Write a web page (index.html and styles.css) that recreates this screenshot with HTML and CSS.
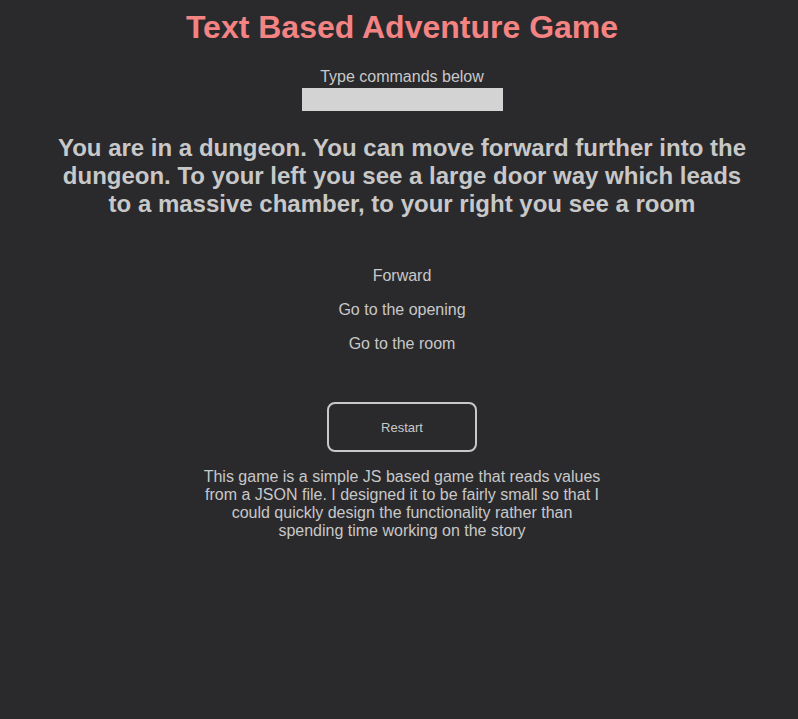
FILE: index.html
```html
<!DOCTYPE html>
<html lang="en">
<head>
<meta charset="utf-8">
<title>Text Based Adventure Game</title>
<link rel="stylesheet" href="styles.css">
</head>
<body>
<main class="game">
  <h1 class="title">Text Based Adventure Game</h1>
  <div class="prompt">
    <label class="prompt-label" for="cmd">Type commands below</label>
    <input class="prompt-input" id="cmd" type="text">
  </div>
  <h2 class="scene">You are in a dungeon. You can move forward further into the dungeon. To your left you see a large door way which leads to a massive chamber, to your right you see a room</h2>
  <div class="options">
    <p class="option">Forward</p>
    <p class="option">Go to the opening</p>
    <p class="option">Go to the room</p>
  </div>
  <button class="restart" type="button">Restart</button>
  <p class="about">This game is a simple JS based game that reads values from a JSON file. I designed it to be fairly small so that I could quickly design the functionality rather than spending time working on the story</p>
</main>
</body>
</html>
```
FILE: styles.css
```css
html, body {
  margin: 0;
  padding: 0;
  background: #2a2a2d;
}
body {
  font-family: "Liberation Sans", Arial, sans-serif;
  color: #c8c8c8;
  min-height: 719px;
}
.game {
  display: flex;
  flex-direction: column;
  align-items: center;
  text-align: center;
  padding-left: 6px;
}
.title {
  margin: 9px 0 22px;
  font-size: 32px;
  font-weight: bold;
  color: #f48383;
  line-height: 37px;
}
.prompt {
  display: flex;
  flex-direction: column;
  align-items: center;
  gap: 2px;
}
.prompt-label {
  font-size: 16px;
  line-height: 18px;
}
.prompt-input {
  width: 201px;
  height: 23px;
  box-sizing: border-box;
  border: none;
  background: #d3d3d3;
  margin: 0;
  padding: 0 4px;
  outline: none;
}
.scene {
  width: 700px;
  margin: 23px 0 0;
  font-size: 24px;
  font-weight: bold;
  line-height: 28px;
}
.options {
  margin-top: 49px;
  display: flex;
  flex-direction: column;
  gap: 16px;
}
.option {
  margin: 0;
  font-size: 16px;
  line-height: 18px;
}
.restart {
  margin-top: 49px;
  width: 150px;
  height: 50px;
  box-sizing: border-box;
  border: 2px solid #c8c8c8;
  border-radius: 8px;
  background: transparent;
  color: #c8c8c8;
  font-family: "Liberation Sans", Arial, sans-serif;
  font-size: 13px;
}
.about {
  width: 400px;
  margin: 16px 0 0;
  font-size: 16px;
  line-height: 18px;
}
```
